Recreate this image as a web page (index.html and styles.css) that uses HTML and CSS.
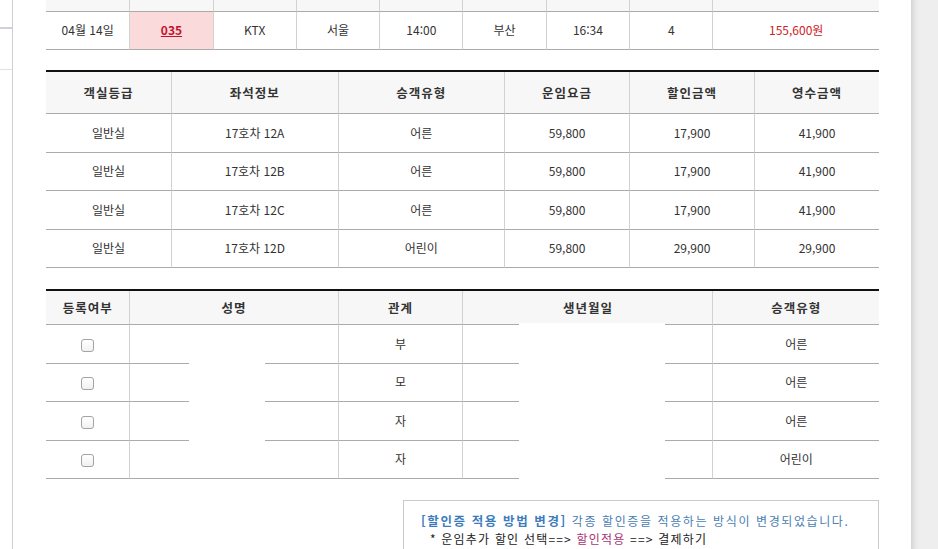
FILE: index.html
```html
<!DOCTYPE html>
<html lang="ko">
<head>
<meta charset="utf-8">
<title>승차권 정보</title>
<link rel="stylesheet" href="styles.css">
</head>
<body>
<div class="page">
  <aside class="side">
    <div class="side-bar"></div>
    <div class="side-line"></div>
  </aside>
  <main class="content">
    <table class="tbl t1">
      <colgroup>
        <col class="c10"><col class="c10"><col class="c10"><col class="c10"><col class="c10"><col class="c10"><col class="c10"><col class="c10"><col class="c20">
      </colgroup>
      <thead>
        <tr class="head-cut"><th></th><th></th><th></th><th></th><th></th><th></th><th></th><th></th><th></th></tr>
      </thead>
      <tbody>
        <tr class="row-38">
          <td>04월 14일</td>
          <td class="hl"><a class="train-no" href="#">035</a></td>
          <td>KTX</td>
          <td>서울</td>
          <td>14:00</td>
          <td>부산</td>
          <td>16:34</td>
          <td>4</td>
          <td class="price">155,600원</td>
        </tr>
      </tbody>
    </table>

    <table class="tbl tbl-top t2">
      <colgroup>
        <col class="c15"><col class="c20"><col class="c20"><col class="c15"><col class="c15"><col class="c15">
      </colgroup>
      <thead>
        <tr class="head-tall"><th>객실등급</th><th>좌석정보</th><th>승객유형</th><th>운임요금</th><th>할인금액</th><th>영수금액</th></tr>
      </thead>
      <tbody>
        <tr class="row"><td>일반실</td><td>17호차 12A</td><td>어른</td><td>59,800</td><td>17,900</td><td>41,900</td></tr>
        <tr class="row"><td>일반실</td><td>17호차 12B</td><td>어른</td><td>59,800</td><td>17,900</td><td>41,900</td></tr>
        <tr class="row"><td>일반실</td><td>17호차 12C</td><td>어른</td><td>59,800</td><td>17,900</td><td>41,900</td></tr>
        <tr class="row"><td>일반실</td><td>17호차 12D</td><td>어린이</td><td>59,800</td><td>29,900</td><td>29,900</td></tr>
      </tbody>
    </table>

    <div class="t3wrap">
      <table class="tbl tbl-top t3">
        <colgroup>
          <col class="c10"><col class="c25"><col class="c15"><col class="c30"><col class="c20">
        </colgroup>
        <thead>
          <tr class="head-short"><th>등록여부</th><th>성명</th><th>관계</th><th>생년월일</th><th>승객유형</th></tr>
        </thead>
        <tbody>
          <tr class="row"><td><input type="checkbox" class="chk"></td><td></td><td>부</td><td></td><td>어른</td></tr>
          <tr class="row"><td><input type="checkbox" class="chk"></td><td></td><td>모</td><td></td><td>어른</td></tr>
          <tr class="row"><td><input type="checkbox" class="chk"></td><td></td><td>자</td><td></td><td>어른</td></tr>
          <tr class="row"><td><input type="checkbox" class="chk"></td><td></td><td>자</td><td></td><td>어린이</td></tr>
        </tbody>
      </table>
      <div class="mask mask-name"></div>
      <div class="mask mask-birth"></div>
    </div>

    <div class="notice">
      <p class="notice-line notice-head"><strong class="notice-title">[할인증 적용 방법 변경]</strong> <span class="notice-blue">각종 할인증을 적용하는 방식이 변경되었습니다.</span></p>
      <p class="notice-line notice-step">* 운임추가 할인 선택==&gt; <span class="notice-pink">할인적용</span> ==&gt; 결제하기</p>
    </div>
  </main>
  <div class="scroll"></div>
</div>
</body>
</html>
```

FILE: styles.css
```css
* {
  box-sizing: border-box;
}

html, body {
  margin: 0;
  padding: 0;
  background: #fff;
}

body {
  font-family: "Noto Sans CJK KR", "Noto Sans", sans-serif;
  font-size: 12px;
  color: #333;
}

.page {
  display: flex;
  height: 549px;
  overflow: hidden;
}

.side {
  width: 13px;
  flex: none;
  border-right: 1px solid #cfcfcf;
}

.side-bar {
  margin-top: 27px;
  height: 2px;
  background: #cdd1dc;
}

.side-line {
  margin-top: 40px;
  height: 1px;
  background: #e2e2e2;
}

.content {
  flex: 1;
  min-width: 0;
  padding: 0 32px 0 33px;
}

.scroll {
  width: 27px;
  flex: none;
  background: linear-gradient(to right, #d4d4d4 0, #e6e6e6 4px, #eeeeee 8px, #eeeeee 100%);
}

/* tables */
.tbl {
  width: 100%;
  border-collapse: separate;
  border-spacing: 0;
  table-layout: fixed;
  text-align: center;
}

.tbl-top {
  border-top: 2px solid #111;
}

.c10 { width: 10%; }
.c15 { width: 15%; }
.c20 { width: 20%; }
.c25 { width: 25%; }
.c30 { width: 30%; }

.tbl th,
.tbl td {
  padding: 0;
  border-bottom: 1px solid #ababab;
  border-left: 1px solid #d2d2d2;
  vertical-align: middle;
  line-height: 16px;
  white-space: nowrap;
}

.tbl th:first-child,
.tbl td:first-child {
  border-left: none;
}

.tbl th {
  background: #f7f7f7;
  font-size: 12.5px;
  font-weight: bold;
  letter-spacing: 1px;
  color: #333;
}

.tbl td {
  color: #333;
}

.head-cut th {
  height: 12px;
  line-height: 1px;
}

.head-tall th {
  height: 42px;
}

.head-short th {
  height: 34px;
}

.row-38 td {
  height: 38px;
  padding-bottom: 2px;
}

.row td {
  height: 38.5px;
}

.t2 {
  margin-top: 20px;
}

.t3wrap {
  position: relative;
  margin-top: 21px;
}

.tbl td.hl {
  background: #fbdadc;
}

.train-no {
  color: #c1122f;
  font-weight: bold;
  text-decoration: underline;
}

.tbl td.price {
  color: #cc2229;
}

.chk {
  appearance: none;
  -webkit-appearance: none;
  display: inline-block;
  width: 13px;
  height: 13px;
  margin: 0;
  vertical-align: middle;
  border: 1px solid #a3a3a3;
  border-radius: 3px;
  background: linear-gradient(#ffffff, #f1f1f1);
}

/* privacy masks over name / birth columns */
.mask {
  position: absolute;
  background: #fff;
}

.mask-name {
  left: 143px;
  top: 36px;
  width: 76px;
  height: 153px;
}

.mask-birth {
  left: 473px;
  top: 34px;
  width: 146px;
  height: 160px;
}

/* notice */
.notice {
  width: 476px;
  margin: 21px 0 0 auto;
  border: 1px solid #cbcbcb;
  padding: 11px 17px 10px;
}

.notice-line {
  margin: 0;
  line-height: 18px;
  font-size: 12px;
  letter-spacing: 1.2px;
  white-space: nowrap;
  color: #222;
}

.notice-head {
  letter-spacing: 1.6px;
}

.notice-title {
  color: #3d7cbc;
  font-size: 12.5px;
}

.notice-blue {
  color: #4a80b3;
}

.notice-step {
  padding-left: 9px;
}

.notice-pink {
  color: #a93577;
}
```
